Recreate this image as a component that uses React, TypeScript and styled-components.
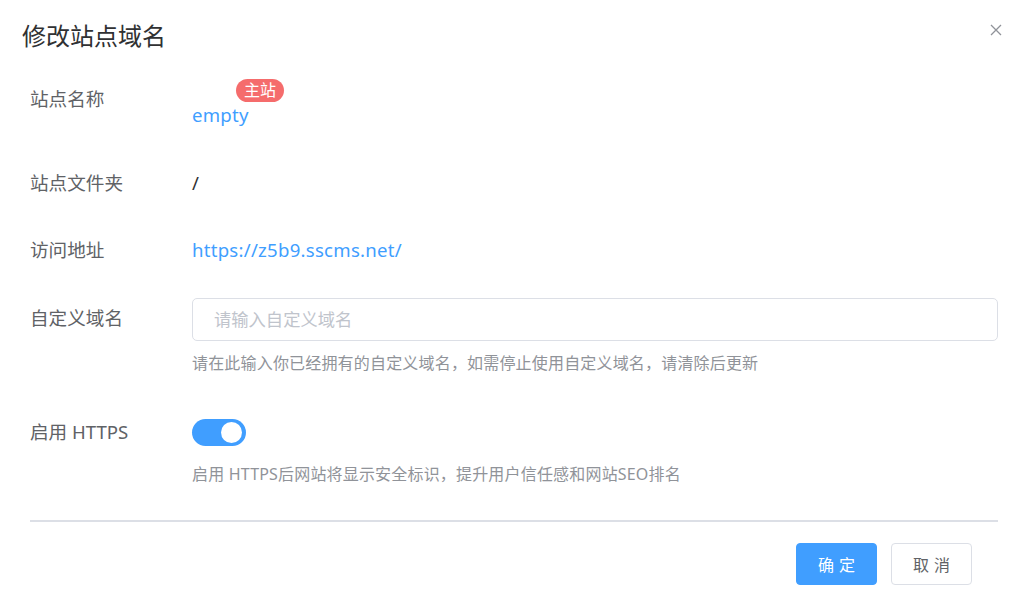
import React, { useState } from "react";
import styled, { createGlobalStyle } from "styled-components";

const GlobalStyle = createGlobalStyle`
    html, body {
        margin: 0;
        padding: 0;
        background: #ffffff;
    }
    body {
        font-family: "Noto Sans", "Noto Sans CJK SC", sans-serif;
    }
`;

const Dialog = styled.div`
    width: 1024px;
    height: 606px;
    box-sizing: border-box;
    background: #ffffff;
    display: flex;
    flex-direction: column;
    overflow: hidden;
`;

const Header = styled.header`
    height: 79px;
    box-sizing: border-box;
    padding: 21px 22px 0 22px;
    display: flex;
    justify-content: space-between;
    align-items: flex-start;
`;

const Title = styled.h1`
    margin: 0;
    font-size: 24px;
    line-height: 30px;
    font-weight: 400;
    color: #303133;
`;

const CloseButton = styled.button`
    border: 0;
    background: none;
    padding: 0;
    margin: 3px 0 0 0;
    width: 12px;
    height: 12px;
    cursor: pointer;
    display: flex;
`;

const Form = styled.div`
    padding: 0 26px 0 30px;
    display: flex;
    flex-direction: column;
`;

type ItemProps = {
    gap?: number;
};

const FormItem = styled.div<ItemProps>`
    display: flex;
    margin-top: ${(props) => props.gap || 0}px;
`;

const Label = styled.label`
    width: 162px;
    flex-shrink: 0;
    font-size: 18.6px;
    line-height: 40px;
    color: #606266;
`;

type ContentProps = {
    offset?: number;
};

const Content = styled.div<ContentProps>`
    flex: 1;
    padding-top: ${(props) => props.offset || 0}px;
    display: flex;
    flex-direction: column;
    align-items: flex-start;
`;

type ValueProps = {
    link?: boolean;
};

const Value = styled.span<ValueProps>`
    position: relative;
    display: inline-block;
    font-size: 18.6px;
    line-height: 40px;
    letter-spacing: 0.25px;
    color: ${(props) => (props.link ? "#409eff" : "#303133")};
`;

const Badge = styled.sup`
    position: absolute;
    top: -16px;
    left: 44px;
    height: 23px;
    padding: 0 8px;
    border-radius: 12px;
    background: #f56c6c;
    color: #ffffff;
    font-size: 16px;
    line-height: 23px;
    letter-spacing: 0;
    white-space: nowrap;
`;

const Input = styled.input`
    width: 100%;
    height: 43px;
    box-sizing: border-box;
    border: 1px solid #dcdfe6;
    border-radius: 5px;
    padding: 0 21px;
    font-family: inherit;
    font-size: 17.3px;
    color: #606266;
    outline: none;

    &::placeholder {
        color: #c0c4cc;
    }
`;

const Hint = styled.div`
    margin-top: 11px;
    font-size: 16px;
    line-height: 22px;
    letter-spacing: 0.18px;
    color: #909399;
`;

const SwitchRow = styled.div`
    height: 40px;
    display: flex;
    align-items: center;
`;

type SwitchProps = {
    on: boolean;
};

const SwitchTrack = styled.button<SwitchProps>`
    position: relative;
    width: 54px;
    height: 27px;
    border: 0;
    padding: 0;
    margin-top: 1px;
    border-radius: 14px;
    background: ${(props) => (props.on ? "#409eff" : "#dcdfe6")};
    cursor: pointer;
`;

const SwitchKnob = styled.span<SwitchProps>`
    position: absolute;
    top: 3px;
    left: ${(props) => (props.on ? "29px" : "3px")};
    width: 21px;
    height: 21px;
    border-radius: 50%;
    background: #ffffff;
    transition: left 0.2s;
`;

const Divider = styled.hr`
    margin: 35px 26px 0 30px;
    border: 0;
    border-top: 2px solid #dcdfe6;
    height: 0;
`;

const Footer = styled.footer`
    display: flex;
    justify-content: flex-end;
    gap: 14px;
    padding: 21px 52px 0 0;
`;

type ButtonProps = {
    primary?: boolean;
};

const Button = styled.button<ButtonProps>`
    width: 81px;
    height: 42px;
    box-sizing: border-box;
    border-radius: 4px;
    border: 1px solid ${(props) => (props.primary ? "#409eff" : "#dcdfe6")};
    background: ${(props) => (props.primary ? "#409eff" : "#ffffff")};
    color: ${(props) => (props.primary ? "#ffffff" : "#606266")};
    font-family: inherit;
    font-size: 16px;
    letter-spacing: 5px;
    text-indent: 5px;
    cursor: pointer;
`;

const CloseIcon = () => (
    <svg width="12" height="12" viewBox="0 0 12 12">
        <path
            d="M1 1 L11 11 M11 1 L1 11"
            stroke="#909399"
            strokeWidth="1.3"
            fill="none"
        />
    </svg>
);

export default function App() {
    const [https, setHttps] = useState(true);

    return (
        <Dialog>
            <GlobalStyle />
            <Header>
                <Title>修改站点域名</Title>
                <CloseButton aria-label="关闭">
                    <CloseIcon />
                </CloseButton>
            </Header>
            <Form>
                <FormItem>
                    <Label>站点名称</Label>
                    <Content offset={16}>
                        <Value link>
                            empty
                            <Badge>主站</Badge>
                        </Value>
                    </Content>
                </FormItem>
                <FormItem gap={28}>
                    <Label>站点文件夹</Label>
                    <Content>
                        <Value>/</Value>
                    </Content>
                </FormItem>
                <FormItem gap={27}>
                    <Label>访问地址</Label>
                    <Content>
                        <Value link>https://z5b9.sscms.net/</Value>
                    </Content>
                </FormItem>
                <FormItem gap={28}>
                    <Label>自定义域名</Label>
                    <Content>
                        <Input placeholder="请输入自定义域名" />
                        <Hint>
                            请在此输入你已经拥有的自定义域名，如需停止使用自定义域名，请清除后更新
                        </Hint>
                    </Content>
                </FormItem>
                <FormItem gap={38}>
                    <Label>启用 HTTPS</Label>
                    <Content>
                        <SwitchRow>
                            <SwitchTrack on={https} onClick={() => setHttps(!https)}>
                                <SwitchKnob on={https} />
                            </SwitchTrack>
                        </SwitchRow>
                        <Hint>启用 HTTPS后网站将显示安全标识，提升用户信任感和网站SEO排名</Hint>
                    </Content>
                </FormItem>
            </Form>
            <Divider />
            <Footer>
                <Button primary>确定</Button>
                <Button>取消</Button>
            </Footer>
        </Dialog>
    );
}
